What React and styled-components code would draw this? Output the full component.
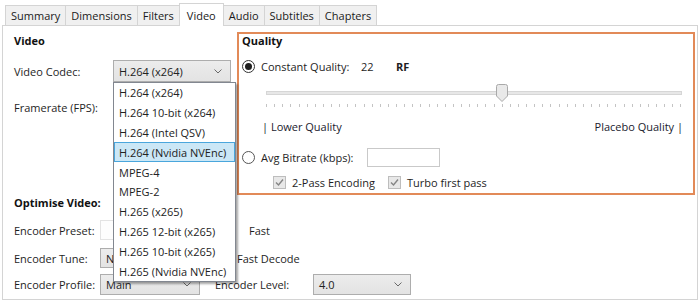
import React from "react";
import styled, { createGlobalStyle } from "styled-components";

const GlobalStyle = createGlobalStyle`
  html, body {
    margin: 0;
    padding: 0;
    background: #ffffff;
  }
  body {
    font-family: "Open Sans", "Liberation Sans", sans-serif;
    font-size: 11px;
    color: #1e1e1e;
  }
`;

const Window = styled.div`
  width: 700px;
  height: 300px;
  box-sizing: border-box;
  padding: 3px 2px 0 2px;
  overflow: hidden;
  display: flex;
  flex-direction: column;
`;

const TabBar = styled.div`
  display: flex;
  align-items: flex-end;
  height: 22px;
  padding-left: 4px;
`;

const Tab = styled.div`
  position: relative;
  z-index: ${(p) => (p.$active ? 2 : 1)};
  box-sizing: border-box;
  height: ${(p) => (p.$active ? "23px" : "20px")};
  margin-bottom: ${(p) => (p.$active ? "-1px" : "0")};
  margin-left: -1px;
  padding: 0 ${(p) => (p.$active ? "7px" : "5px")};
  display: flex;
  align-items: center;
  border: 1px solid #d4d4d4;
  border-bottom: none;
  background: ${(p) => (p.$active ? "#ffffff" : "#f0f0f0")};
  color: #1a1a1a;
`;

const Panel = styled.div`
  flex: 1;
  box-sizing: border-box;
  border: 1px solid #d4d4d4;
  background: #ffffff;
  display: flex;
  flex-direction: column;
`;

const TopSection = styled.div`
  display: flex;
  align-items: flex-start;
  padding: 6px 2px 0 11px;
`;

const LeftColumn = styled.div`
  width: 223px;
  display: flex;
  flex-direction: column;
  padding-top: 2px;
`;

const QualityBox = styled.div`
  flex: 1;
  display: flex;
  flex-direction: column;
  border: 2px solid #e28a58;
  padding: 0 10px 2px 3px;
`;

const Heading = styled.div`
  font-weight: 700;
  height: 14px;
  line-height: 14px;
  margin-top: ${(p) => p.$mt || 0}px;
  color: #111;
`;

const FormRow = styled.div`
  display: flex;
  align-items: center;
  margin-top: ${(p) => p.$mt || 0}px;
  height: ${(p) => p.$h}px;
  padding-left: ${(p) => p.$pl || 0}px;
  justify-content: ${(p) => (p.$between ? "space-between" : "flex-start")};
`;

const Label = styled.span`
  width: ${(p) => p.$w}px;
  flex-shrink: 0;
  white-space: nowrap;
  margin-left: ${(p) => p.$ml || 0}px;
`;

const Select = styled.div`
  position: relative;
  box-sizing: border-box;
  width: ${(p) => p.$w}px;
  height: ${(p) => p.$h || 22}px;
  flex-shrink: 0;
  display: flex;
  align-items: center;
  justify-content: space-between;
  padding: 0 8px 0 5px;
  border: 1px solid #adadad;
  background: linear-gradient(#ececec, #e3e3e3);
  color: #222;
  white-space: nowrap;
`;

const Chevron = () => (
  <svg width="8" height="5" viewBox="0 0 8 5">
    <polyline points="0.5,0.5 4,4 7.5,0.5" fill="none" stroke="#6a6a6a" strokeWidth="1" />
  </svg>
);

const DropList = styled.div`
  position: absolute;
  z-index: 10;
  top: calc(100% + 1px);
  left: -1px;
  width: 123px;
  box-sizing: border-box;
  border: 1px solid #828790;
  background: #ffffff;
  box-shadow: 2px 2px 2px rgba(0, 0, 0, 0.35);
`;

const DropItem = styled.div`
  height: 19.8px;
  box-sizing: border-box;
  display: flex;
  align-items: center;
  padding-left: 4px;
  border: 1px solid ${(p) => (p.$hover ? "#4aa6dc" : "transparent")};
  background: ${(p) => (p.$hover ? "#cbe7f6" : "transparent")};
  color: #222;
  white-space: nowrap;
`;

const Radio = styled.span`
  width: 13px;
  height: 13px;
  box-sizing: border-box;
  flex-shrink: 0;
  border: 1px solid ${(p) => (p.$checked ? "#333" : "#555")};
  border-radius: 50%;
  background: #fff;
  display: flex;
  align-items: center;
  justify-content: center;
  &::after {
    content: "";
    width: 7px;
    height: 7px;
    border-radius: 50%;
    background: #1f1f1f;
    display: ${(p) => (p.$checked ? "block" : "none")};
  }
`;

const Value = styled.span`
  width: 35px;
`;

const Unit = styled.span`
  font-weight: 700;
`;

const SliderWrap = styled.div`
  display: flex;
  flex-direction: column;
  margin: 4px 1px 0 24px;
`;

const Track = styled.div`
  position: relative;
  margin-top: 11px;
  height: 4px;
  box-sizing: border-box;
  border: 1px solid #d6d6d6;
  background: #e7e7e7;
`;

const Thumb = styled.svg`
  position: absolute;
  top: -8px;
  margin-left: -6px;
`;

const Ticks = styled.div`
  display: flex;
  justify-content: space-between;
  margin-top: 9px;
  height: 3px;
`;

const Tick = styled.span`
  width: 1px;
  height: 3px;
  background: #c4c4c4;
`;

const ScaleLabel = styled.span`
  color: #1a1a2e;
`;

const TextInput = styled.div`
  width: 73px;
  height: 19px;
  box-sizing: border-box;
  border: 1px solid #c9c9c9;
  background: #fff;
`;

const CheckItem = styled.div`
  display: flex;
  align-items: center;
  width: ${(p) => (p.$w ? `${p.$w}px` : "auto")};
  margin-left: ${(p) => p.$ml || 0}px;
  white-space: nowrap;
`;

const CheckBox = styled.span`
  width: 13px;
  height: 13px;
  box-sizing: border-box;
  flex-shrink: 0;
  border: 1px solid #bdbdbd;
  background: #e8e8e8;
  display: flex;
  align-items: center;
  justify-content: center;
  margin-right: 6px;
`;

const CheckMark = () => (
  <svg width="11" height="11" viewBox="0 0 11 11">
    <polyline points="2,5.5 4.5,8 9,2.5" fill="none" stroke="#858585" strokeWidth="1.4" />
  </svg>
);

const OptimiseSection = styled.div`
  display: flex;
  flex-direction: column;
  padding-left: 11px;
`;

const PresetTrack = styled.div`
  width: 136px;
  height: 20px;
  box-sizing: border-box;
  border: 1px solid #e3e3e3;
  background: #fdfdfd;
`;

const codecs = [
  "H.264 (x264)",
  "H.264 10-bit (x264)",
  "H.264 (Intel QSV)",
  "H.264 (Nvidia NVEnc)",
  "MPEG-4",
  "MPEG-2",
  "H.265 (x265)",
  "H.265 12-bit (x265)",
  "H.265 10-bit (x265)",
  "H.265 (Nvidia NVEnc)",
];

const tabs = ["Summary", "Dimensions", "Filters", "Video", "Audio", "Subtitles", "Chapters"];

const RF_MAX = 51;
const rf = 22;

const App = () => {
  // slider runs from low quality (left) to placebo (right), so RF is inverted
  const thumbPos = ((RF_MAX - rf) / RF_MAX) * 100;
  return (
    <Window>
      <GlobalStyle />
      <TabBar>
        {tabs.map((t) => (
          <Tab key={t} $active={t === "Video"}>
            {t}
          </Tab>
        ))}
      </TabBar>
      <Panel>
        <TopSection>
          <LeftColumn>
            <Heading>Video</Heading>
            <FormRow $mt={12} $h={22}>
              <Label $w={99}>Video Codec:</Label>
              <Select $w={118}>
                <span>H.264 (x264)</span>
                <Chevron />
                <DropList>
                  {codecs.map((c, idx) => (
                    <DropItem key={c} $hover={idx === 3}>
                      {c}
                    </DropItem>
                  ))}
                </DropList>
              </Select>
            </FormRow>
            <FormRow $mt={15} $h={20}>
              <Label $w={99}>Framerate (FPS):</Label>
              <Select $w={118} $h={20}>
                <span />
                <Chevron />
              </Select>
            </FormRow>
          </LeftColumn>

          <QualityBox>
            <Heading>Quality</Heading>
            <FormRow $mt={8} $h={20}>
              <Radio $checked />
              <Label $w={100} $ml={6}>Constant Quality:</Label>
              <Value>{rf}</Value>
              <Unit>RF</Unit>
            </FormRow>
            <SliderWrap>
              <Track>
                <Thumb
                  width="12"
                  height="18"
                  viewBox="0 0 12 18"
                  style={{ left: `${thumbPos}%` }}
                >
                  <path
                    d="M2.5 0.5 H9.5 Q11.5 0.5 11.5 2.5 V12 L6 17.5 L0.5 12 V2.5 Q0.5 0.5 2.5 0.5 Z"
                    fill="#e9e9e9"
                    stroke="#a9a9a9"
                  />
                </Thumb>
              </Track>
              <Ticks>
                {Array.from({ length: RF_MAX + 1 }, (_, i) => (
                  <Tick key={i} />
                ))}
              </Ticks>
            </SliderWrap>
            <FormRow $mt={10} $h={18} $pl={20} $between>
              <ScaleLabel>| Lower Quality</ScaleLabel>
              <ScaleLabel>Placebo Quality |</ScaleLabel>
            </FormRow>
            <FormRow $mt={12} $h={20}>
              <Radio />
              <Label $w={106} $ml={6}>Avg Bitrate (kbps):</Label>
              <TextInput />
            </FormRow>
            <FormRow $mt={6} $h={18} $pl={31}>
              <CheckItem $w={115}>
                <CheckBox>
                  <CheckMark />
                </CheckBox>
                2-Pass Encoding
              </CheckItem>
              <CheckItem>
                <CheckBox>
                  <CheckMark />
                </CheckBox>
                Turbo first pass
              </CheckItem>
            </FormRow>
          </QualityBox>
        </TopSection>

        <OptimiseSection>
          <Heading $mt={1}>Optimise Video:</Heading>
          <FormRow $mt={10} $h={20}>
            <Label $w={86}>Encoder Preset:</Label>
            <PresetTrack />
            <Label $w={40} $ml={13}>Fast</Label>
          </FormRow>
          <FormRow $mt={8} $h={20}>
            <Label $w={86}>Encoder Tune:</Label>
            <Select $w={100} $h={20}>
              <span>None</span>
              <Chevron />
            </Select>
            <CheckItem $ml={18}>
              <CheckBox />
              Fast Decode
            </CheckItem>
          </FormRow>
          <FormRow $mt={6} $h={21}>
            <Label $w={86}>Encoder Profile:</Label>
            <Select $w={100} $h={21}>
              <span>Main</span>
              <Chevron />
            </Select>
            <Label $w={98} $ml={15}>Encoder Level:</Label>
            <Select $w={98} $h={21}>
              <span>4.0</span>
              <Chevron />
            </Select>
          </FormRow>
        </OptimiseSection>
      </Panel>
    </Window>
  );
};

export default App;
